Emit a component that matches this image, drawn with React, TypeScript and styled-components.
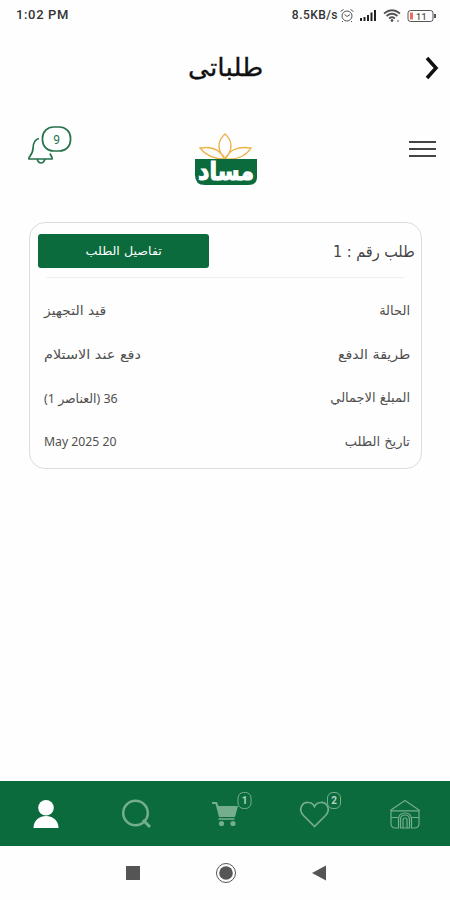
import React from "react";
import styled, { createGlobalStyle } from "styled-components";

const GREEN = "#0b6b3d";

const GlobalStyle = createGlobalStyle`
  * { box-sizing: border-box; }
  body { margin: 0; background: #fefefe; }
`;

const Screen = styled.div`
  direction: rtl;
  width: 450px;
  height: 900px;
  display: flex;
  flex-direction: column;
  overflow: hidden;
  background: #fefefe;
  color: #111;
  font-family: "DejaVu Sans", sans-serif;
`;

const StatusBar = styled.div`
  direction: ltr;
  height: 29px;
  padding: 0 14px 0 16px;
  display: flex;
  align-items: center;
  justify-content: space-between;
  font: 500 13px Roboto, sans-serif;
  letter-spacing: 0.65px;
  color: #333;
`;

const StatusGroup = styled.div`
  display: flex;
  align-items: center;
  font-size: 12px;
  letter-spacing: 0.45px;
`;

const TitleBar = styled.header`
  height: 82px;
  display: grid;
  grid-template-columns: 60px 1fr 60px;
  align-items: center;
  padding: 0 0 4px;
`;

const Title = styled.h1`
  margin: 0;
  padding-left: 2px;
  text-align: center;
  font-size: 25px;
  line-height: 40px;
  font-weight: 400;
  -webkit-text-stroke: 0.3px #111;
`;

const BrandBar = styled.div`
  direction: ltr;
  height: 111px;
  padding: 14px 14px 0 27px;
  display: grid;
  grid-template-columns: 168px 62px 1fr;
  align-items: start;
`;

const MenuButton = styled.button`
  justify-self: end;
  margin-top: 14px;
  padding: 0;
  border: 0;
  background: none;
`;

const LogoSlot = styled.div`
  padding-top: 7px;
`;

const Card = styled.section`
  margin: 0 28px 0 29px;
  height: 247px;
  border: 1px solid #dcdcdc;
  border-radius: 16px;
`;

const CardHead = styled.div`
  height: 55px;
  margin: 0 16px;
  padding-top: 2px;
  border-bottom: 1px solid #f0f0f0;
  display: flex;
  justify-content: space-between;
  align-items: center;
`;

const OrderNumber = styled.div`
  margin-right: -10px;
  font-size: 16px;
  color: #444;
`;

const DetailsButton = styled.button`
  margin-left: -8px;
  width: 171px;
  height: 34px;
  padding: 0 0 0 1px;
  border: 0;
  border-radius: 3px;
  background: ${GREEN};
  color: #fff;
  font: 11.5px "DejaVu Sans", sans-serif;
`;

const Rows = styled.div`
  padding: 11px 11px 0 14px;
`;

const Row = styled.div`
  height: 43.5px;
  display: flex;
  justify-content: space-between;
  align-items: center;
  font-size: 13px;
  color: #505050;
`;

const Fit = styled.span<{ $x?: number; $origin?: string; $latin?: boolean }>`
  display: inline-block;
  white-space: nowrap;
  transform: scaleX(${(p) => p.$x ?? 1});
  transform-origin: ${(p) => p.$origin ?? "center"};
  font-family: ${(p) => (p.$latin ? '"Noto Sans", "DejaVu Sans", sans-serif' : "inherit")};
`;

const TabBar = styled.nav`
  direction: ltr;
  margin-top: auto;
  height: 65px;
  padding-left: 1px;
  background: ${GREEN};
  display: grid;
  grid-template-columns: repeat(5, 1fr);
  align-items: center;
  justify-items: center;
`;

const SystemBar = styled.div`
  direction: ltr;
  height: 54px;
  padding-left: 1px;
  display: grid;
  grid-template-columns: 20px 20px 20px;
  column-gap: 73px;
  justify-content: center;
  align-items: center;
  justify-items: center;
`;

const Glyph = styled.svg`
  display: block;
  overflow: visible;
`;

const details = [
  { label: "الحالة", value: "قيد التجهيز", lx: 1, vx: 1.07, latin: false },
  { label: "طريقة الدفع", value: "دفع عند الاستلام", lx: 1.09, vx: 1.11, latin: false },
  { label: "المبلغ الاجمالي", value: "36 (العناصر 1)", lx: 1, vx: 0.96, latin: true },
  { label: "تاريخ الطلب", value: "20 May 2025", lx: 1, vx: 0.94, latin: true },
];

const StatusIcons = () => (
  <Glyph width="98" height="18" viewBox="0 0 98 18" fill="none" stroke="#555">
    <circle cx="9" cy="10" r="5" />
    <path d="M6.500 8.500 9 10.500l3-2M2.500 5.500l3-2M12.500 3.500l3 2M5 15l-1 1M13 15l1 1" />
    <path d="M23 12v3M26.500 11v4M30 9v6M33.500 6.500v8.500M37 4v11" stroke="#222" strokeWidth="2" />
    <path d="M46 7.500q8-6.500 16 0M48.500 10q5.500-4.500 11 0M51 12.500q3-2.500 6 0" strokeWidth="1.700" />
    <circle cx="54" cy="14.500" r="1" fill="#444" />
    <path d="M60 14v2" />
    <rect x="70" y="4.500" width="25" height="11" rx="2.500" />
    <rect x="72" y="6.500" width="3" height="7" fill="#ee6a62" stroke="none" />
    <path d="M97 8v4" strokeWidth="2" />
    <text x="78" y="13.500" fontSize="9" fill="#555" stroke="none" fontFamily="Roboto">11</text>
  </Glyph>
);

const Bell = () => (
  <Glyph width="46" height="40" viewBox="0 0 46 40" fill="none" stroke="#25734b" strokeWidth="1.700">
    <path d="M12 13.500c-4 1-6 5-6 10 0 4-1 5-4 9v1.500h23v-1.500l-2-4M10 34c1 3 2 4 4 4s3-1 4-4" />
    <rect x="15.500" y="2" width="28" height="24" rx="11" />
    <text x="29.500" y="18.500" textAnchor="middle" fontSize="12" fill="#25734b" stroke="none" fontFamily="Roboto">9</text>
  </Glyph>
);

const Logo = () => (
  <Glyph width="62" height="54" viewBox="0 0 62 54">
    <g fill="none" stroke="#eeb34d" strokeWidth="1.400">
      <path d="M30 27c-8-9-8-18 0-25 8 7 8 16 0 25ZM30 27C25 17 17 14 5 16c6 8 14 11 25 11ZM30 27c5-10 13-13 26-11-5 8-13 12-26 11Z" />
    </g>
    <path d="M0 27h62v18q0 8-9 8H10Q0 53 0 43Z" fill={GREEN} />
    <g transform="translate(31 48) scale(1 1.150)">
      <text textAnchor="middle" textLength="56" lengthAdjust="spacingAndGlyphs" fontFamily="DejaVu Sans" fontSize="22" fontWeight="700" fill="#fff" stroke="#fff" strokeWidth="1">مساد</text>
    </g>
  </Glyph>
);

const PersonIcon = () => (
  <Glyph width="26" height="30" viewBox="0 0 26 30" fill="#fff">
    <circle cx="13" cy="8.800" r="7.800" />
    <path d="M.5 29c0-16 25-16 25 0Z" />
  </Glyph>
);

const SearchIcon = () => (
  <Glyph width="30" height="30" viewBox="0 0 30 30" fill="none" stroke="#75ad8f" strokeWidth="2.500">
    <circle cx="14.500" cy="14" r="12.300" />
    <path d="m22 21 7 7" strokeWidth="3" />
  </Glyph>
);

const CartIcon = () => (
  <Glyph width="40" height="40" viewBox="0 0 40 40" fill="#75ad8f">
    <path d="M7 8h5l1.500 4H33l-3 11H14L10.500 10H7Z" />
    <path d="M13.500 24.200h16v1.600h-16Z" />
    <circle cx="16.500" cy="29.500" r="2.600" />
    <circle cx="28" cy="29.500" r="2.600" />
    <rect x="33" y="-1.500" width="13" height="16" rx="5.500" fill="none" stroke="#75ad8f" />
    <text x="39.500" y="10" textAnchor="middle" fontSize="10" fontWeight="700" fontFamily="Roboto" fill="#b5d3c2">1</text>
  </Glyph>
);

const HeartIcon = () => (
  <Glyph width="40" height="40" viewBox="0 0 40 40" fill="none" stroke="#75ad8f" strokeWidth="1.700">
    <path d="M19.500 32.500 8.500 21.500C2.500 15 7.500 8 13.500 8.500q4 .2 6 4 2-3.800 6-4c6-.5 11 6.500 5 13Z" />
    <rect x="32.500" y="-1.500" width="13" height="16" rx="5.500" strokeWidth="1" />
    <text x="39" y="10" textAnchor="middle" fontSize="10" fontWeight="700" fontFamily="Roboto" fill="#b5d3c2" stroke="none">2</text>
  </Glyph>
);

const HomeIcon = () => (
  <Glyph width="30" height="30" viewBox="0 0 30 30" fill="none" stroke="#75ad8f" strokeWidth="1.200">
    <path d="M1 11 15 1.500 29 11v13.500q0 4.500-5 4.500h-2.500v-8.500q0-6.500-6.500-6.500t-6.500 6.500V29H6q-5 0-5-4.500ZM1.500 11.800h27" />
    <path d="M10.500 29v-8.500q0-4.500 4.500-4.500t4.500 4.500V29ZM13 29v-8q0-2 2-2t2 2v8M1 18.500h7.500M21.500 18.500H29" />
  </Glyph>
);

export default function App() {
  return (
    <Screen>
      <GlobalStyle />
      <StatusBar>
        <span>1:02 PM</span>
        <StatusGroup><span>8.5KB/s</span><StatusIcons /></StatusGroup>
      </StatusBar>
      <TitleBar>
        <Glyph width="40" height="24" viewBox="0 0 40 24" fill="none" stroke="#111" strokeWidth="3.500">
          <path d="m17 2 9 10-9 10" />
        </Glyph>
        <Title><Fit $x={1.057}>طلباتى</Fit></Title>
      </TitleBar>
      <BrandBar>
        <Bell />
        <LogoSlot><Logo /></LogoSlot>
        <MenuButton aria-label="menu">
          <Glyph width="27" height="20" viewBox="0 0 27 20" stroke="#444" strokeWidth="2">
            <path d="M0 3h27M0 10h27M0 17h27" />
          </Glyph>
        </MenuButton>
      </BrandBar>
      <Card>
        <CardHead>
          <OrderNumber><Fit $x={0.9} $origin="right">طلب رقم : 1</Fit></OrderNumber>
          <DetailsButton><Fit $x={1.1}>تفاصيل الطلب</Fit></DetailsButton>
        </CardHead>
        <Rows>
          {details.map((d) => (
            <Row key={d.label}>
              <Fit $x={d.lx} $origin="right">{d.label}</Fit>
              <Fit $x={d.vx} $origin="left" $latin={d.latin}>{d.value}</Fit>
            </Row>
          ))}
        </Rows>
      </Card>
      <TabBar>
        <PersonIcon />
        <SearchIcon />
        <CartIcon />
        <HeartIcon />
        <HomeIcon />
      </TabBar>
      <SystemBar>
        <Glyph width="14" height="14"><path d="M0 0h14v14H0Z" fill="#555" /></Glyph>
        <Glyph width="20" height="20">
          <circle cx="10" cy="10" r="9.500" fill="none" stroke="#555" />
          <circle cx="10" cy="10" r="6.800" fill="#555" />
        </Glyph>
        <Glyph width="14" height="16"><path d="M14 .5v15L0 8Z" fill="#555" /></Glyph>
      </SystemBar>
    </Screen>
  );
}
